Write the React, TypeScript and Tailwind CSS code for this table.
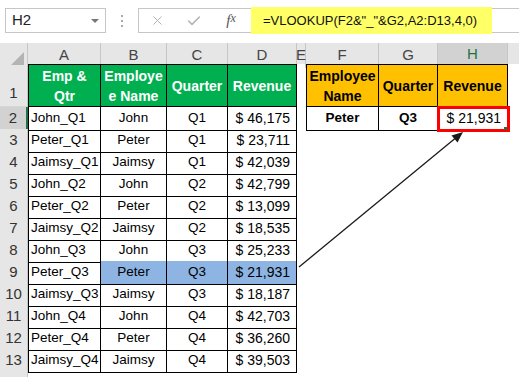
import { X, Check } from 'lucide-react';

const COLS = 'grid grid-cols-[28px_73px_66px_61px_69px_9px_73px_59px_70px_1fr]';

const DATA = [
  ['John_Q1', 'John', 'Q1', '46,175'],
  ['Peter_Q1', 'Peter', 'Q1', '23,711'],
  ['Jaimsy_Q1', 'Jaimsy', 'Q1', '42,039'],
  ['John_Q2', 'John', 'Q2', '42,799'],
  ['Peter_Q2', 'Peter', 'Q2', '13,099'],
  ['Jaimsy_Q2', 'Jaimsy', 'Q2', '18,535'],
  ['John_Q3', 'John', 'Q3', '25,233'],
  ['Peter_Q3', 'Peter', 'Q3', '21,931'],
  ['Jaimsy_Q3', 'Jaimsy', 'Q3', '18,187'],
  ['John_Q4', 'John', 'Q4', '42,703'],
  ['Peter_Q4', 'Peter', 'Q4', '36,260'],
  ['Jaimsy_Q4', 'Jaimsy', 'Q4', '39,503'],
];

function RowHead({ n, active }: { n: number; active?: boolean }) {
  return (
    <div
      className={`flex items-center justify-center border-b border-[#d6d6d6] text-[15px] text-[#333] ${
        active ? 'bg-[#d2d2d2] border-r-2 border-r-[#217346]' : 'bg-[#e6e6e6] border-r border-r-[#c6c6c6]'
      }`}
    >
      {n}
    </div>
  );
}

export default function App() {
  return (
    <div className="relative w-[519px] h-[377px] overflow-hidden bg-white font-['Liberation_Sans',Arial,sans-serif] text-black">
      {/* Formula bar */}
      <div className="flex items-start h-[43px] pt-[8px] pl-[5px]">
        <div className="relative flex items-center w-[101px] h-[25px] border border-[#c6c6c6] pl-[6px] text-[15px] text-[#222]">
          H2
          <span className="absolute right-[6px] top-[10px] w-0 h-0 border-l-[4px] border-r-[4px] border-t-[4px] border-l-transparent border-r-transparent border-t-[#777]" />
        </div>
        <div className="flex flex-col items-center justify-center gap-[3px] w-[32px] h-[25px]">
          <span className="w-[2px] h-[2px] bg-[#a8a8a8]" />
          <span className="w-[2px] h-[2px] bg-[#a8a8a8]" />
          <span className="w-[2px] h-[2px] bg-[#a8a8a8]" />
        </div>
        <div className="flex flex-1 h-[25px] border-y border-l border-[#c6c6c6]">
          <div className="flex items-center w-[112px] shrink-0">
            <div className="w-[37px] flex justify-center">
              <X size={15} strokeWidth={1.6} color="#b4b4b4" />
            </div>
            <div className="w-[36px] flex justify-center">
              <Check size={16} strokeWidth={2.4} color="#b4b4b4" />
            </div>
            <div className="w-[38px] flex justify-center font-['Liberation_Serif',serif] italic text-[15px] text-[#555]">
              f<span className="text-[12px]">x</span>
            </div>
          </div>
          <div className="flex items-center w-[241px] -my-[2px] bg-[#ffff66] pl-[12px] text-[13px] text-[#111] whitespace-nowrap">
            =VLOOKUP(F2&amp;"_"&amp;G2,A2:D13,4,0)
          </div>
        </div>
      </div>

      {/* Column headers */}
      <div className={`${COLS} h-[21px] bg-[#e6e6e6] text-[15px] text-[#444]`}>
        <div className="relative border-r border-[#c6c6c6]">
          <svg className="absolute right-[3px] bottom-[3px]" width={13} height={13} viewBox="0 0 13 13">
            <polygon points="13,0 13,13 0,13" fill="#b4b4b4" />
          </svg>
        </div>
        {['A', 'B', 'C', 'D', 'E', 'F', 'G'].map((c) => (
          <div key={c} className="flex items-center justify-center border-r border-[#c6c6c6]">
            {c}
          </div>
        ))}
        <div className="flex items-center justify-center bg-[#d2d2d2] border-r border-[#c6c6c6] border-b-2 border-b-[#217346] text-[#217346]">
          H
        </div>
        <div />
      </div>

      {/* Row 1 */}
      <div className={`${COLS} h-[43px] text-[14px] font-bold leading-[20px]`}>
        <div className="flex items-end justify-center pb-[2px] bg-[#e6e6e6] border-r border-[#c6c6c6] border-b border-b-[#d6d6d6] text-[15px] font-normal text-[#333] leading-[22px]">
          1
        </div>
        <div className="flex items-center justify-center text-center bg-[#00b050] text-white border border-black">
          Emp &amp;<br />Qtr
        </div>
        <div className="flex items-center justify-center text-center bg-[#00b050] text-white border-y border-r border-black">
          Employe<br />e Name
        </div>
        <div className="flex items-center justify-center bg-[#00b050] text-white border-y border-r border-black">
          Quarter
        </div>
        <div className="flex items-center justify-center bg-[#00b050] text-white border-y border-r border-black">
          Revenue
        </div>
        <div />
        <div className="flex items-center justify-center text-center bg-[#ffc000] border border-black">
          Employee<br />Name
        </div>
        <div className="flex items-center justify-center bg-[#ffc000] border-y border-r border-black">
          Quarter
        </div>
        <div className="flex items-center justify-center bg-[#ffc000] border-y border-r border-black">
          Revenue
        </div>
        <div />
      </div>

      {/* Data rows */}
      {DATA.map((r, i) => {
        const hl = i === 7;
        return (
          <div key={r[0]} className={`${COLS} h-[22px] text-[13.5px]`}>
            <RowHead n={i + 2} active={i === 0} />
            <div className="flex items-center pl-[2px] border-l border-r border-b border-black whitespace-nowrap">
              {r[0]}
            </div>
            <div className={`flex items-center justify-center border-r border-b border-black ${hl ? 'bg-[#8db4e2]' : ''}`}>
              {r[1]}
            </div>
            <div className={`flex items-center justify-center border-r border-b border-black ${hl ? 'bg-[#8db4e2]' : ''}`}>
              {r[2]}
            </div>
            <div className={`flex items-center justify-end pr-[6px] border-r border-b border-black whitespace-pre text-[14px] ${hl ? 'bg-[#8db4e2]' : ''}`}>
              {'$ ' + r[3]}
            </div>
            <div />
            {i === 0 ? (
              <>
                <div className="flex items-center justify-center font-bold border-l border-r border-b border-black">
                  Peter
                </div>
                <div className="flex items-center justify-center font-bold border-r border-b border-black">Q3</div>
                <div className="relative flex items-center justify-end pr-[6px] border-r border-b border-black whitespace-pre text-[14px]">
                  $ 21,931
                  <span className="absolute -left-[1px] -right-[3px] -top-[1px] -bottom-[2px] border-[3px] border-[#ff0000]" />
                  <span className="absolute right-[0px] bottom-[0px] w-[3px] h-[3px] bg-[#217346]" />
                </div>
              </>
            ) : (
              <>
                <div />
                <div />
                <div />
              </>
            )}
            <div />
          </div>
        );
      })}

      {/* Row 14 header stub */}
      <div className={`${COLS} h-[10px]`}>
        <div className="bg-[#e6e6e6] border-r border-[#c6c6c6]" />
      </div>

      {/* Arrow */}
      <svg className="absolute left-0 top-0 pointer-events-none" width={519} height={377} viewBox="0 0 519 377">
        <line x1={299} y1={267} x2={455} y2={138.5} stroke="#1a1a1a" strokeWidth={1.3} />
        <polygon points="463,132 457.5,142.5 451.5,135.5" fill="#1a1a1a" />
      </svg>
    </div>
  );
}
